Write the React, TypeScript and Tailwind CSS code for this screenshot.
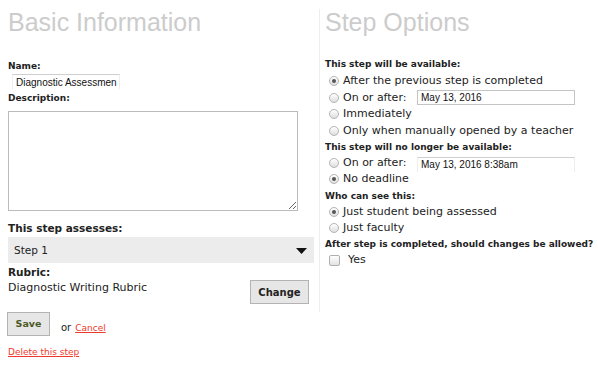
import { useState } from "react"

const SANS = "font-['DejaVu_Sans',sans-serif]"

function Radio({ checked }: { checked?: boolean }) {
  return (
    <span className="ml-[4px] w-[10px] h-[10px] rounded-full border border-[#b4b4b4] bg-[linear-gradient(#ffffff,#dedede)] flex items-center justify-center shrink-0">
      {checked && <span className="w-[4px] h-[4px] rounded-full bg-[#555]" />}
    </span>
  )
}

function Row({ checked, label, h = "h-[16px]", children }: { checked?: boolean; label: string; h?: string; children?: React.ReactNode }) {
  return (
    <div className={`flex items-center ${h}`}>
      <Radio checked={checked} />
      <span className={`ml-[4px] text-[11px] leading-[14px] text-[#222] ${children ? "w-[74px] shrink-0" : ""}`}>{label}</span>
      {children}
    </div>
  )
}

function Label({ children, className = "" }: { children: React.ReactNode; className?: string }) {
  return <p className={`text-[9px] leading-[12px] font-bold text-[#222] ${className}`}>{children}</p>
}

export default function App() {
  const [name, setName] = useState("Diagnostic Assessmen")

  return (
    <div className={`w-[598px] h-[367px] bg-white flex ${SANS}`}>
      {/* Left: basic info */}
      <div className="w-[319px] pl-[8px] shrink-0">
        <h1 className="mt-[10px] h-[25px] text-[25px] leading-[25px] text-[#cccccc] font-['Liberation_Sans',Arial,sans-serif]">Basic Information</h1>

        <Label className="mt-[25px]">Name:</Label>
        <input value={name} onChange={e => setName(e.target.value)}
          className="mt-[2px] ml-[4px] block w-[108px] h-[15px] pl-[3px] text-[10px] leading-[15px] text-[#111] font-['Liberation_Sans',Arial,sans-serif] border-t border-x border-t-[#cfcfcf] border-x-[#eeeeee] outline-none" />

        <Label className="mt-[3px]">Description:</Label>
        <textarea className="mt-[7px] block w-[290px] h-[100px] border border-[#bbbbbb] outline-none" />

        <p className="mt-[10px] text-[10.5px] leading-[14px] font-bold text-[#222]">This step assesses:</p>
        <div className="mt-[2px] w-[306px] h-[26px] bg-[#ececec] flex items-center justify-between pl-[6px] pr-[7px] pt-[1px]">
          <span className="text-[10.5px] text-[#222]">Step 1</span>
          <svg width="11" height="6" viewBox="0 0 11 6"><path d="M0 0h11L5.5 6z" fill="#111" /></svg>
        </div>

        <div className="flex mt-[2px] w-[301px] justify-between">
          <div>
            <p className="text-[10.5px] leading-[14px] font-bold text-[#222]">Rubric:</p>
            <p className="mt-[2px] text-[11px] leading-[14px] text-[#222]">Diagnostic Writing Rubric</p>
          </div>
          <button className="mt-[15px] w-[59px] h-[24px] bg-[#e6e6e6] border border-[#b3b3b3] text-[10px] font-bold text-[#222]">Change</button>
        </div>

        <div className="flex items-end mt-[8px]">
          <button className="-ml-px w-[43px] h-[24px] bg-[#e6e6e6] border border-[#b3b3b3] text-[9.5px] font-bold text-[#4b5a24]">Save</button>
          <span className="ml-[11px] mb-[2px] text-[10px] leading-[12px] text-[#222]">or</span>
          <a href="#" className="ml-[4px] mb-[2px] text-[9px] leading-[12px] text-[#ee3a2c] underline">Cancel</a>
        </div>

        <a href="#" className="block mt-[10px] w-fit text-[9px] leading-[12px] text-[#ee3a2c] underline">Delete this step</a>
      </div>

      {/* Right: step options */}
      <div className="mt-[9px] h-[303px] flex-1 border-l border-[#eeeeee] pl-[5px]">
        <h1 className="mt-[1px] h-[25px] text-[25px] leading-[25px] text-[#cccccc] font-['Liberation_Sans',Arial,sans-serif]">Step Options</h1>

        <Label className="mt-[23px]">This step will be available:</Label>
        <div className="mt-[3px]">
          <Row checked label="After the previous step is completed" />
          <Row label="On or after:" h="h-[17px]">
            <input defaultValue="May 13, 2016"
              className="w-[158px] h-[15px] pl-[3px] text-[10px] leading-[13px] text-[#111] font-['Liberation_Sans',Arial,sans-serif] border border-[#c4c4c4] outline-none" />
          </Row>
          <Row label="Immediately" />
          <Row label="Only when manually opened by a teacher" h="h-[17px]" />
        </div>

        <Label className="mt-[2px]">This step will no longer be available:</Label>
        <div className="mt-[2px]">
          <Row label="On or after:">
            <input defaultValue="May 13, 2016 8:38am"
              className="mt-[2px] w-[158px] h-[15px] pl-[3px] text-[10px] leading-[15px] text-[#111] font-['Liberation_Sans',Arial,sans-serif] border-t border-x border-t-[#cfcfcf] border-x-[#eeeeee] outline-none" />
          </Row>
          <Row checked label="No deadline" />
        </div>

        <Label className="mt-[3px]">Who can see this:</Label>
        <div className="mt-[2px]">
          <Row checked label="Just student being assessed" />
          <Row label="Just faculty" />
        </div>

        <Label className="mt-[2px]">After step is completed, should changes be allowed?</Label>
        <div className="mt-[2px] h-[16px] flex items-center">
          <span className="ml-[4px] w-[11px] h-[11px] rounded-[2px] border border-[#b0b0b0] bg-[linear-gradient(#ffffff,#e2e2e2)] shrink-0" />
          <span className="ml-[8px] text-[11px] leading-[14px] text-[#222]">Yes</span>
        </div>
      </div>
    </div>
  )
}
